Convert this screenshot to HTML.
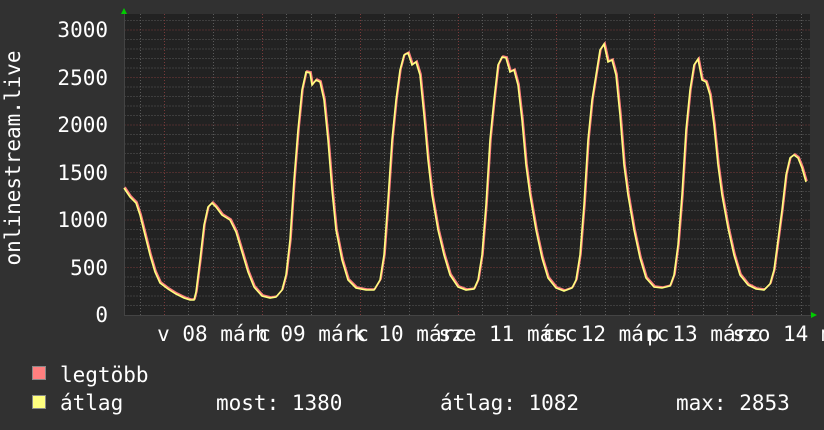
<!DOCTYPE html>
<html><head><meta charset="utf-8"><style>
html,body{margin:0;padding:0;background:#313131;}
svg{display:block;font-family:"DejaVu Sans Mono","Liberation Mono",monospace;}
</style></head><body>
<svg width="824" height="430" viewBox="0 0 824 430" xmlns="http://www.w3.org/2000/svg">
<rect width="824" height="430" fill="#313131"/>
<rect x="124" y="14" width="686" height="301" fill="#222222"/>
<g stroke="#5a5a5a" stroke-width="1" stroke-dasharray="1,2">
<path d="M124.5 305.5H810M124.5 296H810M124.5 286.5H810M124.5 277H810M124.5 258H810M124.5 248.5H810M124.5 239H810M124.5 229.5H810M124.5 210.5H810M124.5 201H810M124.5 191.5H810M124.5 182H810M124.5 163H810M124.5 153.5H810M124.5 144H810M124.5 134.5H810M124.5 115.5H810M124.5 106H810M124.5 96.5H810M124.5 87H810M124.5 68H810M124.5 58.5H810M124.5 49H810M124.5 39.5H810M124.5 20.5H810"/>
<path d="M140.5 14V315M188.5 14V315M213.5 14V315M237.5 14V315M286.5 14V315M311.5 14V315M335.5 14V315M384.5 14V315M409.5 14V315M433.5 14V315M482.5 14V315M507.5 14V315M531.5 14V315M580.5 14V315M605.5 14V315M629.5 14V315M678.5 14V315M703.5 14V315M727.5 14V315M776.5 14V315M801.5 14V315"/>
</g>
<g stroke="#7a3a3a" stroke-width="1" stroke-dasharray="1,2">
<path d="M124.5 267.5H810M124.5 220H810M124.5 172.5H810M124.5 125H810M124.5 77.5H810M124.5 30H810"/>
<path d="M164.5 14V315M262.5 14V315M360.5 14V315M458.5 14V315M556.5 14V315M654.5 14V315M752.5 14V315"/>
</g>
<path d="M124 315.5H812M124.5 315V12" stroke="#444" stroke-width="1"/>
<polygon points="121,14 127,14 124,8" fill="#00cc00"/>
<polygon points="811,312 811,318 817,315" fill="#00cc00"/>
<g fill="none" stroke-width="1.6" stroke-linejoin="miter">
<polyline stroke="#ff7f7f" transform="translate(1,-1)" points="124,188 130,197 136,203 140,215 145,235 150,255 155,272 160,283 168,289 176,294 184,298 190,300 194,300 196,292 200,260 204,225 208,207 212,203 216,207 222,215 230,220 236,232 242,252 248,272 254,287 262,296 270,298 276,297 282,290 286,275 290,240 294,180 298,130 302,90 306,72 310,73 312,85 316,80 320,82 324,100 328,140 332,190 336,230 342,260 348,280 356,288 366,290 374,290 380,280 384,255 388,200 392,140 396,100 400,70 404,55 408,53 412,65 416,62 420,75 424,115 428,160 432,195 438,230 444,255 450,275 458,287 466,290 474,289 478,280 482,255 486,205 490,140 494,100 498,65 502,57 506,58 510,72 514,70 518,85 522,120 526,165 530,195 536,230 542,258 548,278 556,288 564,291 572,288 576,280 580,255 584,205 588,140 592,100 596,75 600,50 604,44 608,62 612,60 616,75 620,115 624,165 628,195 634,230 640,258 646,278 654,287 662,288 670,286 674,275 678,245 682,195 686,130 690,90 694,65 698,59 702,80 706,82 710,95 714,125 718,165 722,195 728,228 734,255 740,275 748,285 756,289 764,290 770,284 774,270 778,240 782,210 786,175 790,158 794,155 798,158 802,168 806,182"/>
<polyline stroke="#ffff7f" points="124,188 130,197 136,203 140,215 145,235 150,255 155,272 160,283 168,289 176,294 184,298 190,300 194,300 196,292 200,260 204,225 208,207 212,203 216,207 222,215 230,220 236,232 242,252 248,272 254,287 262,296 270,298 276,297 282,290 286,275 290,240 294,180 298,130 302,90 306,72 310,73 312,85 316,80 320,82 324,100 328,140 332,190 336,230 342,260 348,280 356,288 366,290 374,290 380,280 384,255 388,200 392,140 396,100 400,70 404,55 408,53 412,65 416,62 420,75 424,115 428,160 432,195 438,230 444,255 450,275 458,287 466,290 474,289 478,280 482,255 486,205 490,140 494,100 498,65 502,57 506,58 510,72 514,70 518,85 522,120 526,165 530,195 536,230 542,258 548,278 556,288 564,291 572,288 576,280 580,255 584,205 588,140 592,100 596,75 600,50 604,44 608,62 612,60 616,75 620,115 624,165 628,195 634,230 640,258 646,278 654,287 662,288 670,286 674,275 678,245 682,195 686,130 690,90 694,65 698,59 702,80 706,82 710,95 714,125 718,165 722,195 728,228 734,255 740,275 748,285 756,289 764,290 770,284 774,270 778,240 782,210 786,175 790,158 794,155 798,158 802,168 806,182"/>
</g>
<g fill="#ffffff" font-size="21" text-anchor="end">
<text x="108" y="37">3000</text>
<text x="108" y="85">2500</text>
<text x="108" y="132">2000</text>
<text x="108" y="180">1500</text>
<text x="108" y="227">1000</text>
<text x="108" y="275">500</text>
<text x="108" y="322">0</text>
</g>
<text transform="translate(20,158) rotate(-90)" fill="#fff" font-size="21" text-anchor="middle">onlinestream.live</text>
<g fill="#ffffff" font-size="21" text-anchor="middle">
<text x="214" y="341">v 08 márc</text>
<text x="312" y="341">h 09 márc</text>
<text x="410" y="341">k 10 márc</text>
<text x="508" y="341">sze 11 márc</text>
<text x="606" y="341">cs 12 márc</text>
<text x="704" y="341">p 13 márc</text>
<text x="802" y="341">szo 14 márc</text>
</g>
<rect x="32.5" y="366.5" width="13" height="13" fill="#ff7f7f" stroke="#888"/>
<rect x="32.5" y="395.5" width="13" height="13" fill="#ffff7f" stroke="#888"/>
<g fill="#ffffff" font-size="21">
<text x="60" y="382">legtöbb</text>
<text x="60" y="410">átlag</text>
<text x="216" y="410">most: 1380</text>
<text x="440" y="410">átlag: 1082</text>
<text x="676" y="410">max: 2853</text>
</g>
</svg>
</body></html>
